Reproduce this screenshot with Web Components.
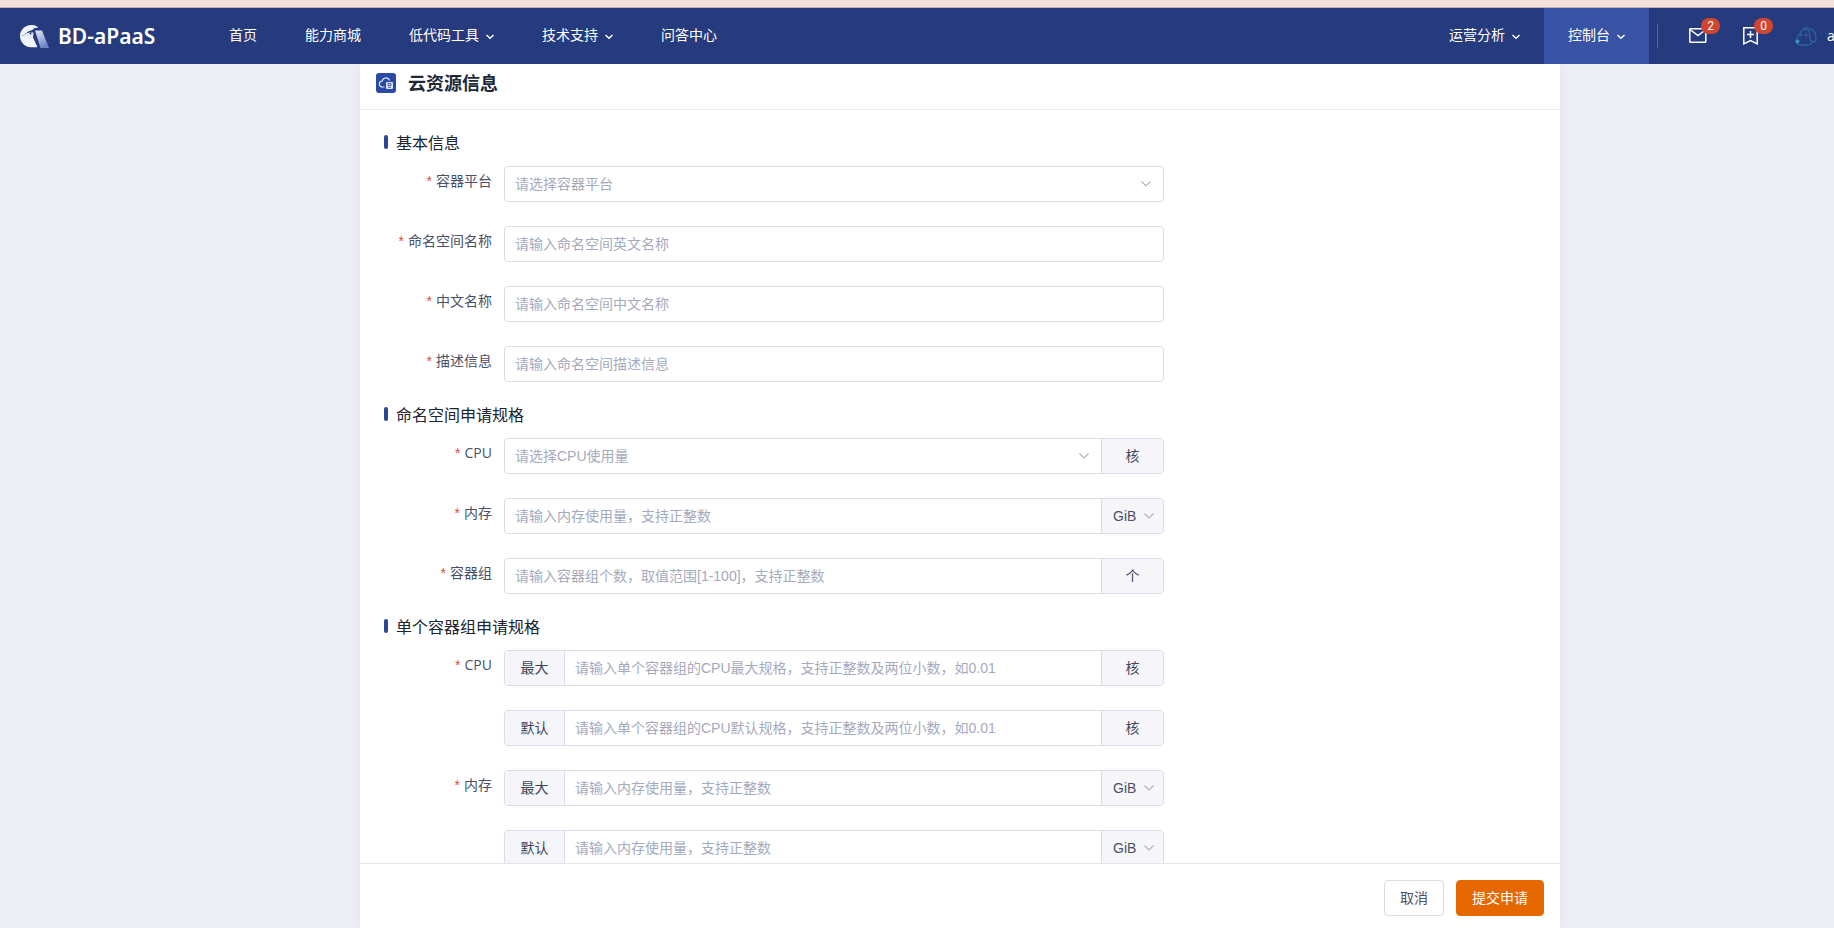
<!DOCTYPE html>
<html lang="zh-CN">
<head>
<meta charset="utf-8">
<title>BD-aPaaS 云资源信息</title>
<style>
html,body{margin:0;height:100%}
body{font-family:"Open Sans","Noto Sans CJK SC",sans-serif;font-size:14px;line-height:20px;color:#4a5166;background:#eeeff5;overflow:hidden;
--line:#dadce8;--brand:#263b7d;--control:"Liberation Sans","Noto Sans CJK SC",sans-serif}
</style>
</head>
<body>
<app-shell>
  <app-header slot="header">
    <nav-item>首页</nav-item>
    <nav-item>能力商城</nav-item>
    <nav-item menu>低代码工具</nav-item>
    <nav-item menu>技术支持</nav-item>
    <nav-item>问答中心</nav-item>
    <nav-item slot="right" menu tab>运营分析</nav-item>
    <nav-item slot="right" menu tab active>控制台</nav-item>
    <user-tools slot="right"></user-tools>
  </app-header>
  <page-title slot="title">云资源信息</page-title>
  <form-section heading="基本信息">
    <form-row label="容器平台" kind="select" hint="请选择容器平台"></form-row>
    <form-row label="命名空间名称" hint="请输入命名空间英文名称"></form-row>
    <form-row label="中文名称" hint="请输入命名空间中文名称"></form-row>
    <form-row label="描述信息" hint="请输入命名空间描述信息"></form-row>
  </form-section>
  <form-section heading="命名空间申请规格">
    <form-row label="CPU" kind="select" hint="请选择CPU使用量" after="核"></form-row>
    <form-row label="内存" hint="请输入内存使用量，支持正整数" after="GiB" after-select></form-row>
    <form-row label="容器组" hint="请输入容器组个数，取值范围[1-100]，支持正整数" after="个"></form-row>
  </form-section>
  <form-section heading="单个容器组申请规格">
    <form-row label="CPU" before="最大" hint="请输入单个容器组的CPU最大规格，支持正整数及两位小数，如0.01" after="核"></form-row>
    <form-row before="默认" hint="请输入单个容器组的CPU默认规格，支持正整数及两位小数，如0.01" after="核"></form-row>
    <form-row label="内存" before="最大" hint="请输入内存使用量，支持正整数" after="GiB" after-select></form-row>
    <form-row before="默认" hint="请输入内存使用量，支持正整数" after="GiB" after-select></form-row>
  </form-section>
  <action-button slot="actions">取消</action-button>
  <action-button slot="actions" primary>提交申请</action-button>
</app-shell>

<script>
const define = (name, render) => customElements.define(name, class extends HTMLElement {
  connectedCallback() {
    if (this.shadowRoot) return;
    this.attachShadow({ mode: "open" }).innerHTML = render(this);
  }
});

define("app-shell", () => `
<style>
:host{display:flex;flex-direction:column;height:100vh}
.main{flex:1;min-height:0;display:grid;grid-template-columns:360px minmax(0,1200px) 1fr}
.card{grid-column:2;min-height:0;display:flex;flex-direction:column;background:#fff;box-shadow:0 0 10px rgba(38,59,125,.08)}
.scroll{flex:1;min-height:0;overflow-y:auto;scrollbar-width:none;padding:24px 24px 0;box-sizing:border-box}
footer{display:flex;justify-content:flex-end;gap:12px;padding:16px 16px 12px;border-top:1px solid #e4e6ef}
</style>
<slot name="header"></slot>
<main class="main"><div class="card">
  <slot name="title"></slot>
  <div class="scroll"><slot></slot></div>
  <footer><slot name="actions"></slot></footer>
</div></main>`);

define("app-header", () => `
<style>
:host{display:block;position:relative;z-index:1;border-top:7px solid #f5e1da}
header{display:flex;align-items:center;height:56px;border-top:1px solid #c6b1b3;background:var(--brand);color:#fff}
.brand{display:flex;align-items:center;gap:9px;width:209px;padding-left:20px;box-sizing:content-box;font-family:"Noto Sans",sans-serif;font-size:21px;font-weight:600;line-height:28px;color:#fff;text-decoration:none}
nav{display:flex;gap:48px;flex:1}
.right{display:flex;align-items:center}
</style>
<header>
  <a class="brand" href="#">
    <svg width="29" height="23" viewBox="0 0 29 23" aria-hidden="true">
      <defs><linearGradient id="g" x1="0" y1="0" x2=".5" y2="1"><stop offset="0" stop-color="#e6eaf7"/><stop offset="1" stop-color="#6e83c6"/></linearGradient></defs>
      <path fill="#f0f3fb" d="M18 2.500C16 .800 13.500 0 11 0 5 0 0 5 0 11s5 11 11 11.200h6.500L17 22z"/>
      <path fill="#f0f3fb" d="M11 0c3 0 5.500 1 7 2.500L12 12z"/>
      <path fill="#263b7d" d="M1.500 10.500C4 10 6 8.500 7.500 7 10 5 12.500 6 14.500 3L20 2.500V22h-2.500C15 18 14.500 15 12.500 12.500 9 15 4.500 13.500 1.500 10.500z"/>
      <path fill="#f0f3fb" d="M1 11c2-.5 4-1.500 6-3 2-1 4-.5 6.500-.5l-.5 5 4 9.500h-6C5 22 1 18 1 11z" opacity=".95"/>
      <circle cx="10.500" cy="8.500" r="1" fill="#263b7d"/>
      <path fill="url(#g)" d="M15 5.500h7L29 23h-8.500z"/>
    </svg>BD-aPaaS</a>
  <nav><slot></slot></nav>
  <div class="right"><slot name="right"></slot></div>
</header>`);

define("nav-item", el => `
<style>
:host{display:block}
a{display:flex;align-items:center;gap:7px;height:56px;padding-bottom:2px;box-sizing:border-box;color:#fff;text-decoration:none;white-space:nowrap}
:host([tab]) a{padding-left:24px;padding-right:24px}
:host([active]) a{background:#3853a3}
svg{margin-top:4px}
</style>
<a href="#"><slot></slot>${el.hasAttribute("menu") ? `<svg width="8" height="6" viewBox="0 0 8 6" fill="none" stroke="#fff" stroke-width="1.400" aria-hidden="true"><path d="M.5 1 4 4.300 7.500 1"/></svg>` : ""}</a>`);

define("user-tools", () => `
<style>
:host{display:flex;align-items:center;padding-left:8px}
.rule{width:1px;height:24px;background:#53649a;margin-right:31px}
button{position:relative;display:block;border:0;padding:0;background:none;width:18px;height:18px;margin-right:35px}
.badge{position:absolute;left:12px;top:-9px;width:19px;height:16px;border-radius:8px;background:#d2452f;color:#fff;font:12px/16px Roboto,sans-serif;text-align:center}
svg{display:block}
a{display:flex;align-items:center;gap:10px;width:39px;white-space:nowrap;color:#fff;text-decoration:none;font-size:14px}
a svg{flex:none}
</style>
<span class="rule"></span>
<button aria-label="消息"><svg width="18" height="18" viewBox="0 0 18 18" fill="none" stroke="#fff" stroke-width="1.500"><rect x=".8" y="1.800" width="16" height="13.400" rx=".5"/><path d="m1 2.500 8 6 8-6"/></svg><span class="badge">2</span></button>
<button aria-label="收藏"><svg width="18" height="18" viewBox="0 0 18 18" fill="none" stroke="#fff" stroke-width="1.500"><path d="M1.800.8h13.400v16L8.500 13.500 1.800 16.800zM8.500 4v7M5 7.500h7"/></svg><span class="badge">0</span></button>
<a href="#"><svg width="22" height="19" viewBox="0 0 22 19" fill="none" stroke="#2c649f" stroke-width="1.300" aria-hidden="true"><path d="M5.500 5.500C7 2.500 9 .8 12 .8c5 0 9 4 9 9 0 3-.8 5-2.500 5-2.500 0-4-2-4-5V4.500C13.500 2.500 11 2 9 3M5.500 5.500C4.500 9 1 11 1 14c0 2.500 2 4 5 4h6c3 0 5-1.500 6-3.500"/><circle cx="6" cy="8" r=".8" fill="#2c649f"/><circle cx="11" cy="8" r=".8" fill="#2c649f"/><circle cx="2.500" cy="14.500" r="2" fill="#3b8fd0" stroke="none"/></svg>a</a>`);

define("page-title", () => `
<style>
:host{display:block;border-bottom:1px solid #e9ebf0}
h1{display:flex;align-items:center;gap:12px;margin:0;padding:9px 16px 16px;font-size:18px;line-height:20px;font-weight:700;color:#212838}
</style>
<h1><svg width="20" height="20" viewBox="0 0 20 20" aria-hidden="true"><rect width="20" height="20" rx="3" fill="#294aa5"/><path fill="none" stroke="#e4e9f8" stroke-width="1.200" d="M8.500 14H6.500a3 3 0 0 1-.3-6 3.800 3.800 0 0 1 7.300-.5"/><rect x="10" y="9" width="7" height="7" rx="1" fill="#dbe2f5"/><path fill="none" stroke="#294aa5" stroke-width=".8" d="M12 14.300h3M12 12.500h3v-2h-3z"/></svg><slot></slot></h1>`);

define("form-section", el => `
<style>
:host{display:block}
h2{display:flex;align-items:center;gap:8px;margin:0 0 14px;font-size:16px;line-height:18px;font-weight:400;color:#20242e}
h2::before{content:"";width:4px;height:14px;border-radius:2px;background:#294793;margin-bottom:2px}
</style>
<section><h2>${el.getAttribute("heading")}</h2><slot></slot></section>`);

const arrow = `<svg width="10" height="6" viewBox="0 0 10 6" fill="none" stroke="#b0b4c6" stroke-width="1.200" aria-hidden="true"><path d="m.5.5 4.500 4.500L9.500.5"/></svg>`;

define("form-row", el => {
  const at = n => el.getAttribute(n) || "";
  const label = at("label"), hint = at("hint");
  const name = label ? "" : `aria-label="${at("before")}"`;
  const field = at("kind") === "select"
    ? `<select id="f" ${name}><option>${hint}</option></select>${arrow}`
    : `<input id="f" type="text" ${name} placeholder="${hint}">`;
  const after = el.hasAttribute("after-select")
    ? `<span class="after"><select aria-label="单位"><option>${at("after")}</option></select>${arrow}</span>`
    : at("after") ? `<span class="after">${at("after")}</span>` : "";
  return `
<style>
:host{display:grid;grid-template-columns:120px minmax(0,660px);margin-bottom:24px}
label{grid-column:1;padding-right:12px;line-height:30px;text-align:right}
label::before{content:"*";color:#db4d3f;margin-right:4px;font-family:"Liberation Sans",sans-serif}
.group{grid-column:2;display:flex;height:36px;box-sizing:border-box;border:1px solid var(--line);border-radius:4px;overflow:hidden;background:#fff}
.field{flex:1;min-width:0;position:relative}
input,select{display:block;appearance:none;width:100%;height:100%;box-sizing:border-box;border:0;margin:0;padding:0 10px;outline:0;background:none;border-radius:0;font:14px/20px var(--control);color:#4a5166}
.field select,input::placeholder{color:#a5aabc;opacity:1}
svg{position:absolute;right:12px;top:14px;pointer-events:none}
.before,.after{position:relative;flex:none;box-sizing:border-box;background:#f6f6fa;line-height:34px;text-align:center;color:#3f465a}
.before{width:60px;border-right:1px solid var(--line)}
.after{width:62px;border-left:1px solid var(--line)}
.after svg{right:9px}
.after select{padding-left:11px}
</style>
${label ? `<label for="f">${label}</label>` : ""}
<div class="group">${at("before") ? `<span class="before">${at("before")}</span>` : ""}<span class="field">${field}</span>${after}</div>`;
});

define("action-button", () => `
<style>
:host{display:block}
button{display:block;height:36px;padding:0 15px;border:1px solid var(--line);border-radius:4px;background:#fff;color:#4a5166;font:inherit}
:host([primary]) button{background:#e66700;border-color:#e66700;color:#fff}
</style>
<button type="button"><slot></slot></button>`);
</script>
</body>
</html>
